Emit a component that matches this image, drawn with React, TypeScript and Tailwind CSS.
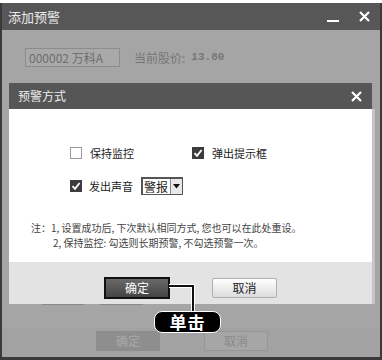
import React from "react";

const font = { fontFamily: '"Noto Sans CJK SC", "Liberation Sans", sans-serif' };

function CheckBox({ checked }: { checked: boolean }) {
  if (checked) {
    return (
      <div className="w-[12px] h-[12px] bg-[#3c3c3c] flex items-center justify-center">
        <svg width="10" height="10" viewBox="0 0 10 10">
          <path d="M1.5 5.2 L4 7.8 L8.6 2" stroke="white" strokeWidth="1.8" fill="none" />
        </svg>
      </div>
    );
  }
  return <div className="w-[12px] h-[12px] border border-[#9a9a9a] bg-white" />;
}

export default function App() {
  return (
    <div className="w-[382px] h-[360px] bg-white relative overflow-hidden" style={font}>
      <div className="mt-[3px] h-[357px] flex flex-col border-x-2 border-b-[3px] border-[#3a3a3a] bg-[#a5a5a5]">
        {/* outer title */}
        <div className="h-[27px] bg-[#575757] flex items-center justify-between pl-[6px] pr-[10px] text-white">
          <span className="text-[13px] text-[#ececec]">添加预警</span>
          <div className="flex items-center gap-[20px]">
            <div className="w-[12px] h-[2px] bg-white mt-[8px]" />
            <svg width="11" height="11" viewBox="0 0 11 11">
              <path d="M1 1 L10 10 M10 1 L1 10" stroke="white" strokeWidth="2.2" />
            </svg>
          </div>
        </div>
        {/* outer body */}
        <div className="flex-1 flex flex-col">
          <div className="flex items-center pt-[18px] pl-[23px]">
            <div className="w-[95px] h-[19px] border border-[#8c8c8c] bg-[#a9a9a9] flex items-center pl-[3px] text-[12px] text-[#6e6e6e]">
              000002 万科A
            </div>
            <span className="ml-[14px] text-[12px] text-[#777]">当前股价:</span>
            <span className="ml-[6px] text-[11px] text-[#777] font-bold" style={{ fontFamily: '"Liberation Mono", monospace' }}>13.80</span>
          </div>
          <div className="flex-1" />
          <div className="h-[29px] bg-[#a2a2a2] flex items-start pt-[3px] pl-[94px] gap-[44px]">
            <div className="w-[64px] h-[20px] bg-[#8e8e8e] flex items-center justify-center text-[12px] text-[#a9a9a9]">确定</div>
            <div className="w-[64px] h-[20px] bg-[#a6a6a6] border border-[#969696] flex items-center justify-center text-[12px] text-[#8a8a8a]">取消</div>
          </div>
        </div>
      </div>

      {/* faint hidden-button edges */}
      <div className="absolute left-[42px] top-[303px] w-[42px] h-[2px] bg-[#8a8a8a]" />
      <div className="absolute left-[100px] top-[303px] w-[43px] h-[2px] bg-[#8a8a8a]" />

      {/* inner dialog */}
      <div className="absolute left-[9px] top-[83px] w-[366px] flex flex-col">
        <div className="h-[26px] w-[363px] bg-[#565656] flex items-center justify-between pl-[9px] pr-[10px]">
          <span className="text-[12px] text-[#eeeeee]">预警方式</span>
          <svg width="11" height="11" viewBox="0 0 11 11">
            <path d="M1 1 L10 10 M10 1 L1 10" stroke="white" strokeWidth="2.2" />
          </svg>
        </div>
        <div className="w-[366px] border-r-[3px] border-[#c4c4c4]">
          <div className="h-[153px] bg-white flex flex-col">
            <div className="flex items-center pt-[38px] pl-[61px] h-[12px] box-content">
              <CheckBox checked={false} />
              <span className="ml-[8px] text-[11px] text-[#222]">保持监控</span>
              <div className="ml-[58px]"><CheckBox checked={true} /></div>
              <span className="ml-[8px] text-[11px] text-[#222]">弹出提示框</span>
            </div>
            <div className="flex items-center mt-[18px] pl-[61px]">
              <CheckBox checked={true} />
              <span className="ml-[7px] text-[11px] text-[#222]">发出声音</span>
              <div className="ml-[8px] h-[18px] w-[42px] border border-[#555] border-t-2 border-l-2 flex items-stretch bg-white">
                <span className="flex-1 text-[12px] text-[#222] leading-[15px] pl-[1px]">警报</span>
                <div className="w-[12px] border-l border-[#888] bg-[#e8e8e8] flex items-center justify-center">
                  <svg width="7" height="5" viewBox="0 0 7 5"><path d="M0 0 L7 0 L3.5 4.5 Z" fill="#111" /></svg>
                </div>
              </div>
            </div>
            <div className="mt-[25px] pl-[22px] text-[10px] text-[#444] leading-[15px]">
              <div>注：1, 设置成功后, 下次默认相同方式, 您也可以在此处重设。</div>
              <div className="pl-[22px]">2, 保持监控: 勾选则长期预警, 不勾选预警一次。</div>
            </div>
          </div>
          <div className="h-[42px] bg-[#e3e3e3] flex items-start pt-[15px] pl-[95px]">
            <div className="w-[66px] h-[22px] border-2 border-[#111] bg-gradient-to-b from-[#6a6a6a] to-[#444] flex items-center justify-center text-[12px] text-white">确定</div>
            <div className="ml-[42px] mt-[1px] w-[65px] h-[20px] border border-[#b0b0b0] rounded-[2px] bg-gradient-to-b from-[#ffffff] to-[#dcdcdc] flex items-center justify-center text-[12px] text-[#222]">取消</div>
          </div>
        </div>
      </div>

      {/* callout */}
      <svg className="absolute left-0 top-0" width="382" height="360">
        <path d="M169 286 H193 V312" stroke="white" strokeWidth="4" fill="none" />
        <path d="M169 286 H193 V312" stroke="#111" strokeWidth="2" fill="none" />
      </svg>
      <div className="absolute left-[154px] top-[311px] w-[67px] h-[22px] rounded-[8px] bg-black border border-white flex items-center justify-center text-white text-[17px] font-bold tracking-[1px]">
        单击
      </div>
    </div>
  );
}
